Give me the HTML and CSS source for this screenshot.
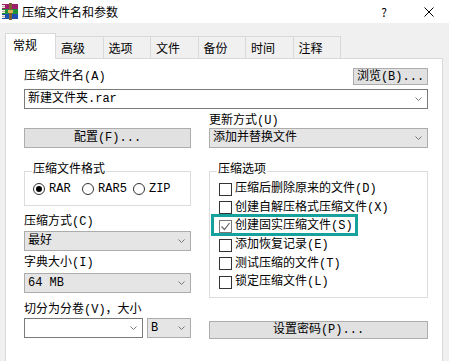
FILE: index.html
```html
<!DOCTYPE html>
<html lang="zh-CN">
<head>
    <meta charset="UTF-8">
    <title>压缩文件名和参数</title>
    <link rel="stylesheet" href="styles.css">
</head>
<body>

    <div class="titlebar">
        <svg class="app-icon" width="18" height="17" viewBox="0 0 18 17">
            <rect x="1" y="1" width="16" height="5" fill="#9c1f6b"/>
            <rect x="1" y="6" width="16" height="5" fill="#1f8f3a"/>
            <rect x="1" y="11" width="16" height="5" fill="#1f4fb0"/>
            <rect x="1" y="2" width="3" height="3" fill="#f4ecd8"/>
            <rect x="1" y="7" width="3" height="3" fill="#f4ecd8"/>
            <rect x="1" y="12" width="3" height="3" fill="#f4ecd8"/>
            <path d="M1 3.5h3M1 8.5h3M1 13.5h3" stroke="#9a9a9a" stroke-width="0.6"/>
            <rect x="8" y="0" width="3" height="17" fill="#7d5f32"/>
            <rect x="7" y="7" width="5" height="3" fill="#d9b45a"/>
        </svg>
        <span class="title">压缩文件名和参数</span>
        <span class="help">?</span>
        <svg class="close" width="10" height="10" viewBox="0 0 10 10">
            <path d="M0.5 0.5L9.5 9.5M9.5 0.5L0.5 9.5" stroke="#000" stroke-width="1"/>
        </svg>
    </div>

    <div class="tabs">
        <div class="tab active">常规</div>
        <div class="tab">高级</div>
        <div class="tab">选项</div>
        <div class="tab">文件</div>
        <div class="tab">备份</div>
        <div class="tab">时间</div>
        <div class="tab">注释</div>
    </div>

    <div class="panel">
        <div class="name-row">
            <span class="label">压缩文件名(A)</span>
            <div class="btn browse">浏览(B)...</div>
        </div>
        <div class="combo plain name-combo">
            <span>新建文件夹.rar</span>
            <svg class="chev" width="7" height="4" viewBox="0 0 7 4"><path d="M0.5 0.5L3.5 3.5L6.5 0.5" fill="none" stroke="#777"/></svg>
        </div>

        <div class="columns">
            <div class="col left">
                <div class="btn config">配置(F)...</div>

                <fieldset class="group">
                    <legend>压缩文件格式</legend>
                    <div class="radios">
                        <div class="radio"><span class="dot on"></span>RAR</div>
                        <div class="radio wide"><span class="dot"></span>RAR5</div>
                        <div class="radio"><span class="dot"></span>ZIP</div>
                    </div>
                </fieldset>

                <div class="label method-label">压缩方式(C)</div>
                <div class="combo method">
                    <span>最好</span>
                    <svg class="chev" width="7" height="4" viewBox="0 0 7 4"><path d="M0.5 0.5L3.5 3.5L6.5 0.5" fill="none" stroke="#777"/></svg>
                </div>

                <div class="label dict-label">字典大小(I)</div>
                <div class="combo dict">
                    <span>64 MB</span>
                    <svg class="chev" width="7" height="4" viewBox="0 0 7 4"><path d="M0.5 0.5L3.5 3.5L6.5 0.5" fill="none" stroke="#777"/></svg>
                </div>

                <div class="label split-label">切分为分卷(V)，大小</div>
                <div class="split-row">
                    <div class="combo plain volume">
                        <span></span>
                        <svg class="chev" width="7" height="4" viewBox="0 0 7 4"><path d="M0.5 0.5L3.5 3.5L6.5 0.5" fill="none" stroke="#777"/></svg>
                    </div>
                    <div class="combo unit">
                        <span>B</span>
                        <svg class="chev" width="7" height="4" viewBox="0 0 7 4"><path d="M0.5 0.5L3.5 3.5L6.5 0.5" fill="none" stroke="#777"/></svg>
                    </div>
                </div>
            </div>

            <div class="col right">
                <div class="label update-label">更新方式(U)</div>
                <div class="combo">
                    <span>添加并替换文件</span>
                    <svg class="chev" width="7" height="4" viewBox="0 0 7 4"><path d="M0.5 0.5L3.5 3.5L6.5 0.5" fill="none" stroke="#777"/></svg>
                </div>

                <fieldset class="group">
                    <legend>压缩选项</legend>
                    <div class="checks">
                        <div class="check"><span class="box"></span>压缩后删除原来的文件(D)</div>
                        <div class="check"><span class="box"></span>创建自解压格式压缩文件(X)</div>
                        <div class="check marked">
                            <span class="box checked">
                                <svg width="11" height="11" viewBox="0 0 11 11"><path d="M1.5 5.5L4.5 8.5L9.5 2" fill="none" stroke="#666" stroke-width="1.2"/></svg>
                            </span>创建固实压缩文件(S)
                        </div>
                        <div class="check"><span class="box"></span>添加恢复记录(E)</div>
                        <div class="check"><span class="box"></span>测试压缩的文件(T)</div>
                        <div class="check"><span class="box"></span>锁定压缩文件(L)</div>
                    </div>
                </fieldset>

                <div class="btn password">设置密码(P)...</div>
            </div>
        </div>
    </div>

</body>
</html>
```

FILE: styles.css
```css
*,
*::before,
*::after {
    box-sizing: border-box;
}

body {
    margin: 0;
    width: 449px;
    height: 361px;
    overflow: hidden;
    background-color: #f0f0f0;
    color: #000;
    font-family: "Liberation Mono", "Noto Sans CJK SC", sans-serif;
    font-size: 12px;
    line-height: 14px;
}

.titlebar {
    display: flex;
    align-items: center;
    height: 23px;
    background-color: #fff;
    font-family: "Noto Sans CJK SC", sans-serif;
}

.app-icon {
    margin-left: 1px;
}

.title {
    margin-left: 3px;
}

.help {
    margin-left: auto;
    margin-right: 37px;
}

.close {
    margin-right: 15px;
}

.tabs {
    display: flex;
    align-items: flex-end;
    height: 25px;
    margin-top: 10px;
    padding-left: 5px;
    font-family: "Noto Sans CJK SC", sans-serif;
}

.tab {
    width: 47.5px;
    height: 22px;
    padding: 4px 0 0 5px;
    border: 1px solid #d9d9d9;
    border-left: none;
    border-bottom: none;
}

.tab.active {
    position: relative;
    z-index: 1;
    width: 51px;
    height: 26px;
    margin-bottom: -1px;
    padding-left: 7px;
    border-left: 1px solid #d9d9d9;
    background-color: #fff;
}

.panel {
    width: 438px;
    height: 320px;
    margin-left: 5px;
    padding: 0 14px 0 18px;
    background-color: #fff;
    border: 1px solid #d9d9d9;
}

/* mixed latin / cjk fonts make line boxes taller, so pin label heights */
.label {
    display: flex;
    align-items: center;
    height: 14px;
}

.name-row {
    display: flex;
    justify-content: space-between;
    align-items: flex-end;
    margin-top: 9px;
}

.name-row .label {
    margin-bottom: 1px;
}

.btn {
    display: flex;
    align-items: center;
    justify-content: center;
    height: 18px;
    background-color: #e1e1e1;
    border: 1px solid #adadad;
}

.browse {
    width: 75px;
    height: 17px;
}

.combo {
    display: flex;
    align-items: center;
    justify-content: space-between;
    height: 20px;
    padding: 0 5px 0 3px;
    background-color: #e5e5e5;
    border: 1px solid #acacac;
}

.combo.plain {
    background-color: #fff;
    border-color: #7a7a7a;
}

.chev {
    flex: none;
}

.name-combo {
    margin-top: 4px;
}

.columns {
    display: flex;
    gap: 18px;
}

.col.left {
    width: 167px;
}

.col.right {
    width: 219px;
}

.config {
    height: 20px;
    margin-top: 19px;
}

.group {
    min-width: 0;
    margin: 16px 0 0;
    padding: 0 8px 5px 9px;
    border: 1px solid #dcdcdc;
}

.group legend {
    height: 14px;
    margin-left: -2px;
    padding: 0 1px;
    line-height: 13px;
}

.radios {
    display: flex;
    align-items: center;
    height: 22px;
    margin-left: -1px;
}

.radio {
    display: flex;
    align-items: center;
    gap: 4px;
    width: 53px;
}

.radio.wide {
    width: 55px;
}

.dot {
    display: flex;
    align-items: center;
    justify-content: center;
    width: 12px;
    height: 12px;
    border: 1px solid #333;
    border-radius: 50%;
    background-color: #fff;
}

.dot.on::after {
    content: "";
    width: 6px;
    height: 6px;
    border-radius: 50%;
    background-color: #000;
}

.method-label {
    margin-top: 9px;
}

.method {
    margin-top: 2px;
}

.dict-label {
    margin-top: 5px;
}

.dict {
    margin-top: 3px;
}

.split-label {
    margin-top: 10px;
}

.split-row {
    display: flex;
    gap: 4px;
    margin-top: 1px;
}

.volume {
    width: 119px;
}

.unit {
    width: 44px;
}

.update-label {
    margin-top: 5px;
}

.checks {
    padding: 2px 0 0;
}

.check {
    display: flex;
    align-items: center;
    gap: 3px;
    height: 18.6px;
}

.box {
    flex: none;
    width: 13px;
    height: 13px;
    border: 1px solid #333;
    background-color: #fff;
}

.box.checked {
    border-color: #777;
}

.box svg {
    display: block;
}

.check.marked {
    position: relative;
}

/* teal annotation frame drawn over the solid-archive option */
.check.marked::after {
    content: "";
    position: absolute;
    left: -8px;
    top: -3px;
    width: 147px;
    height: 22px;
    border: 3px solid #16a19c;
}

.password {
    margin-top: 23px;
}
```
